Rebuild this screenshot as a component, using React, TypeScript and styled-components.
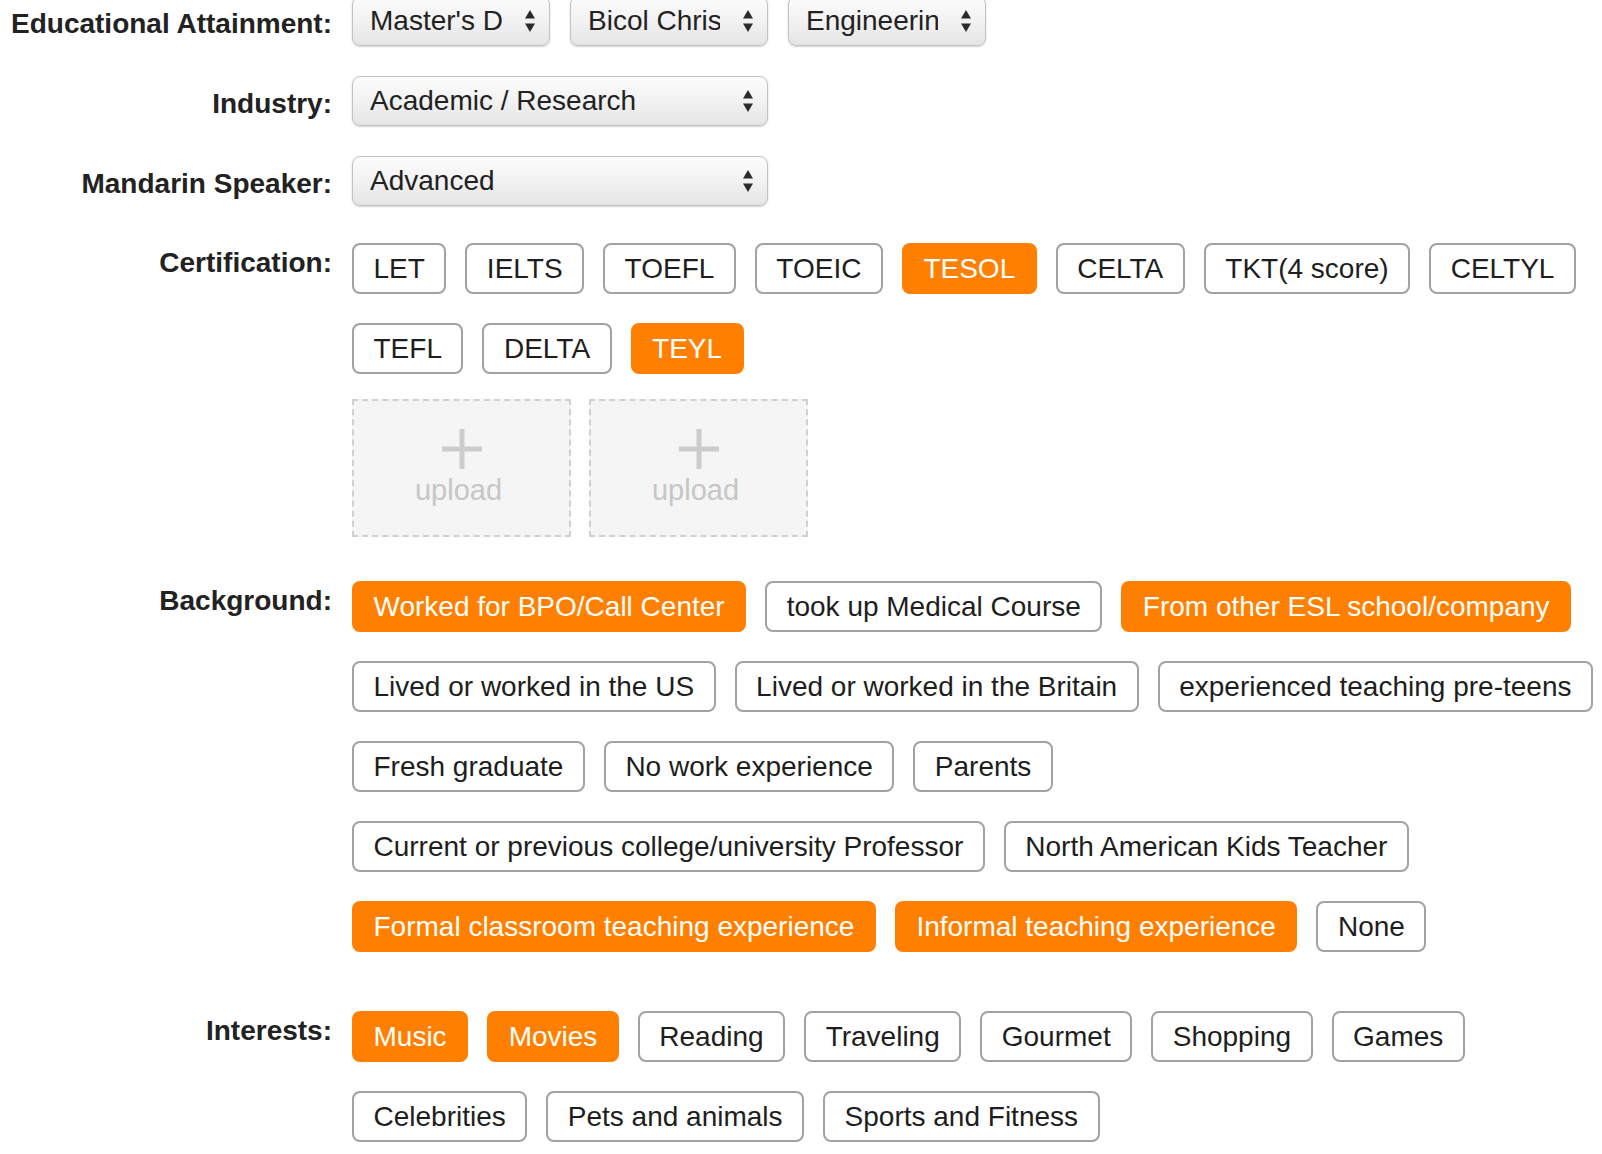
import React from 'react';
import styled, { createGlobalStyle } from 'styled-components';

const GlobalStyle = createGlobalStyle`
  html, body {
    margin: 0;
    padding: 0;
    background: #ffffff;
    overflow: hidden;
  }
  body {
    font-family: "Liberation Sans", Arial, Helvetica, sans-serif;
    color: #222222;
  }
`;

const Page = styled.div`
  display: flex;
  flex-direction: column;
  margin-top: -4px;
`;

const Row = styled.div<{ $mt?: number }>`
  display: grid;
  grid-template-columns: 332px 1fr;
  column-gap: 20px;
  margin-top: ${(p) => p.$mt ?? 0}px;
`;

const Label = styled.div<{ $center?: boolean }>`
  font-weight: 700;
  font-size: 28px;
  line-height: 32px;
  text-align: right;
  white-space: nowrap;
  color: #222222;
  align-self: ${(p) => (p.$center ? 'center' : 'start')};
  padding-top: ${(p) => (p.$center ? 6 : 4)}px;
`;

const SelectGroup = styled.div`
  display: flex;
  gap: 20px;
`;

const SelectBox = styled.div<{ $w: number }>`
  box-sizing: border-box;
  width: ${(p) => p.$w}px;
  height: 50px;
  display: flex;
  align-items: center;
  padding-left: 17px;
  border: 1px solid #c2c2c2;
  border-radius: 8px;
  background: linear-gradient(180deg, #fdfdfd 0%, #f3f3f3 45%, #e5e5e5 100%);
  box-shadow: 0 1px 2px rgba(0, 0, 0, 0.18);
  font-size: 28px;
  line-height: 32px;
  color: #222222;
`;

const SelectValue = styled.span`
  flex: 1;
  min-width: 0;
  overflow: hidden;
  white-space: nowrap;
  text-overflow: clip;
`;

const ArrowIcon = styled.svg`
  flex: none;
  margin-left: 22px;
  margin-right: 13px;
`;

const Chips = styled.div`
  display: flex;
  flex-wrap: wrap;
  column-gap: 19px;
  row-gap: 29px;
`;

const Chip = styled.span<{ $on?: boolean }>`
  box-sizing: border-box;
  height: 51px;
  display: inline-flex;
  align-items: center;
  padding: 0 19.5px;
  border: 2px solid ${(p) => (p.$on ? '#ff8000' : '#a2a2a2')};
  border-radius: 8px;
  background: ${(p) => (p.$on ? '#ff8000' : '#ffffff')};
  color: ${(p) => (p.$on ? '#ffffff' : '#1e1e1e')};
  font-size: 28px;
  line-height: 32px;
  white-space: nowrap;
`;

const Stack = styled.div`
  display: flex;
  flex-direction: column;
`;

const UploadRow = styled.div`
  display: flex;
  gap: 18px;
  margin-top: 25px;
`;

const UploadBox = styled.div`
  box-sizing: border-box;
  width: 219px;
  height: 138px;
  border: 2px dashed #d0d0d0;
  background: #f5f5f5;
  display: flex;
  flex-direction: column;
  align-items: center;
  padding-top: 28px;
`;

const UploadText = styled.span`
  margin-top: 5px;
  font-size: 29px;
  line-height: 32px;
  color: #c6c6c6;
  margin-right: 6px;
`;

const Arrows = () => (
  <ArrowIcon width="12" height="24" viewBox="0 0 12 24">
    <polygon points="1,9.5 6,1 11,9.5" fill="#2a2a2a" />
    <polygon points="1,14.5 11,14.5 6,23" fill="#2a2a2a" />
  </ArrowIcon>
);

const Select = ({ value, w }: { value: string; w: number }) => (
  <SelectBox $w={w}>
    <SelectValue>{value}</SelectValue>
    <Arrows />
  </SelectBox>
);

const Plus = () => (
  <svg width="40" height="40" viewBox="0 0 40 40">
    <rect x="0" y="17.5" width="40" height="5" fill="#cccccc" />
    <rect x="17.5" y="0" width="5" height="40" fill="#cccccc" />
  </svg>
);

const Upload = () => (
  <UploadBox>
    <Plus />
    <UploadText>upload</UploadText>
  </UploadBox>
);

type Item = { t: string; on?: boolean };

const certs: Item[] = [
  { t: 'LET' },
  { t: 'IELTS' },
  { t: 'TOEFL' },
  { t: 'TOEIC' },
  { t: 'TESOL', on: true },
  { t: 'CELTA' },
  { t: 'TKT(4 score)' },
  { t: 'CELTYL' },
  { t: 'TEFL' },
  { t: 'DELTA' },
  { t: 'TEYL', on: true },
];

const backgrounds: Item[] = [
  { t: 'Worked for BPO/Call Center', on: true },
  { t: 'took up Medical Course' },
  { t: 'From other ESL school/company', on: true },
  { t: 'Lived or worked in the US' },
  { t: 'Lived or worked in the Britain' },
  { t: 'experienced teaching pre-teens' },
  { t: 'Fresh graduate' },
  { t: 'No work experience' },
  { t: 'Parents' },
  { t: 'Current or previous college/university Professor' },
  { t: 'North American Kids Teacher' },
  { t: 'Formal classroom teaching experience', on: true },
  { t: 'Informal teaching experience', on: true },
  { t: 'None' },
];

const interests: Item[] = [
  { t: 'Music', on: true },
  { t: 'Movies', on: true },
  { t: 'Reading' },
  { t: 'Traveling' },
  { t: 'Gourmet' },
  { t: 'Shopping' },
  { t: 'Games' },
  { t: 'Celebrities' },
  { t: 'Pets and animals' },
  { t: 'Sports and Fitness' },
];

const ChipList = ({ items }: { items: Item[] }) => (
  <Chips>
    {items.map((it) => (
      <Chip key={it.t} $on={it.on}>
        {it.t}
      </Chip>
    ))}
  </Chips>
);

export default function App() {
  return (
    <>
      <GlobalStyle />
      <Page>
        <Row>
          <Label $center>Educational Attainment:</Label>
          <SelectGroup>
            <Select value="Master's Degree" w={198} />
            <Select value="Bicol Christian College" w={198} />
            <Select value="Engineering" w={198} />
          </SelectGroup>
        </Row>
        <Row $mt={30}>
          <Label $center>Industry:</Label>
          <SelectGroup>
            <Select value="Academic / Research" w={416} />
          </SelectGroup>
        </Row>
        <Row $mt={30}>
          <Label $center>Mandarin Speaker:</Label>
          <SelectGroup>
            <Select value="Advanced" w={416} />
          </SelectGroup>
        </Row>
        <Row $mt={37}>
          <Label>Certification:</Label>
          <Stack>
            <ChipList items={certs} />
            <UploadRow>
              <Upload />
              <Upload />
            </UploadRow>
          </Stack>
        </Row>
        <Row $mt={44}>
          <Label>Background:</Label>
          <ChipList items={backgrounds} />
        </Row>
        <Row $mt={59}>
          <Label>Interests:</Label>
          <ChipList items={interests} />
        </Row>
      </Page>
    </>
  );
}
